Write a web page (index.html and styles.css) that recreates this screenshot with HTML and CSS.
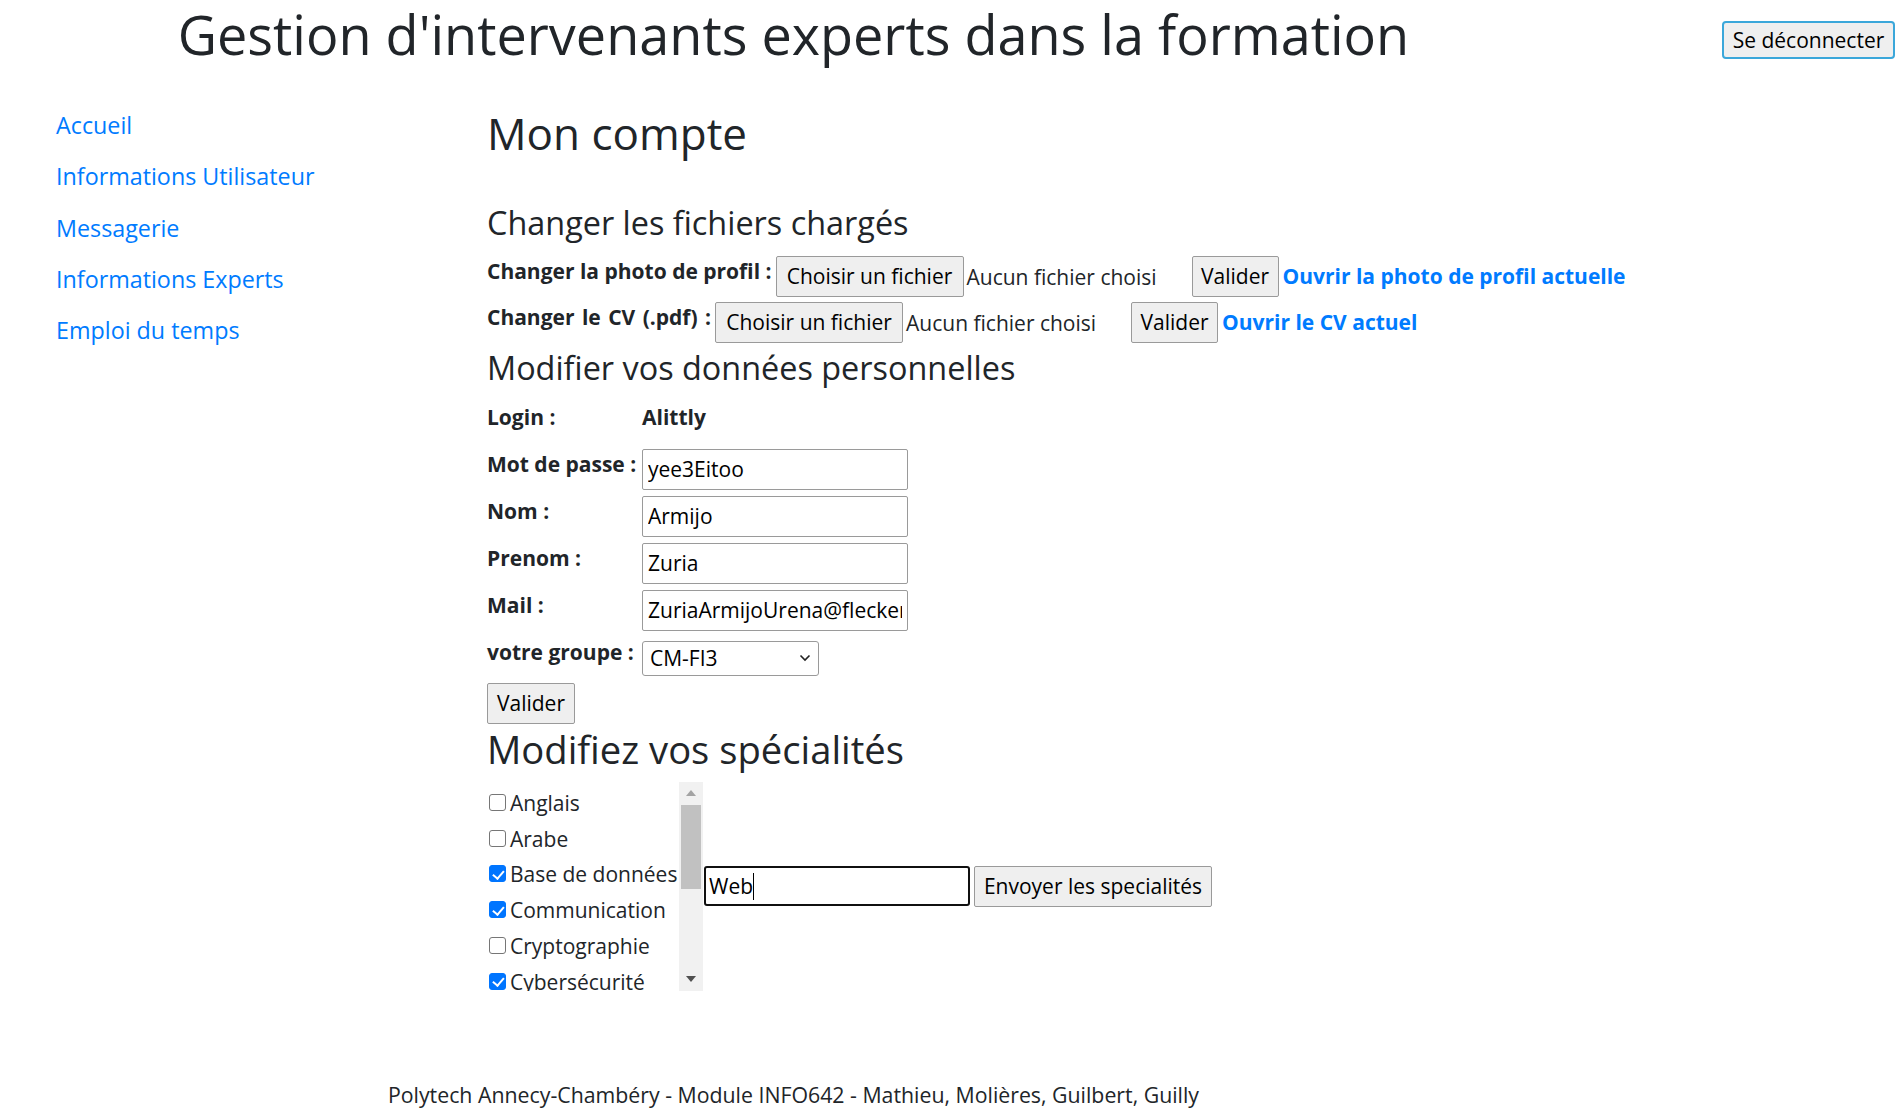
FILE: index.html
```html
<!DOCTYPE html>
<html lang="fr">
<head>
<meta charset="utf-8">
<title>Mon compte</title>
<link rel="stylesheet" href="styles.css">
</head>
<body>
<header class="top">
  <h1 class="top__title">Gestion d'intervenants experts dans la formation</h1>
  <button class="btn btn--logout" type="button">Se déconnecter</button>
</header>

<div class="layout">
  <nav class="side">
    <a class="side__link" href="#">Accueil</a>
    <a class="side__link" href="#">Informations Utilisateur</a>
    <a class="side__link" href="#">Messagerie</a>
    <a class="side__link" href="#">Informations Experts</a>
    <a class="side__link" href="#">Emploi du temps</a>
  </nav>

  <main class="main">
    <h2 class="h-page">Mon compte</h2>

    <h4 class="h-sec">Changer les fichiers chargés</h4>
    <div class="file-row">
      <span class="lbl">Changer la photo de profil :</span>
      <span class="file"><button class="btn btn--file" type="button">Choisir un fichier</button><span class="file__name">Aucun fichier choisi</span></span>
      <button class="btn btn--small" type="button">Valider</button>
      <a class="file-link" href="#">Ouvrir la photo de profil actuelle</a>
    </div>
    <div class="file-row file-row--last">
      <span class="lbl lbl--cv">Changer le CV (.pdf) :</span>
      <span class="file"><button class="btn btn--file" type="button">Choisir un fichier</button><span class="file__name">Aucun fichier choisi</span></span>
      <button class="btn btn--small" type="button">Valider</button>
      <a class="file-link" href="#">Ouvrir le CV actuel</a>
    </div>

    <h4 class="h-sec">Modifier vos données personnelles</h4>
    <div class="data">
      <span class="lbl">Login :</span>
      <span class="lbl">Alittly</span>
      <span class="lbl">Mot de passe :</span>
      <input class="field" type="text" value="yee3Eitoo">
      <span class="lbl">Nom :</span>
      <input class="field" type="text" value="Armijo">
      <span class="lbl">Prenom :</span>
      <input class="field" type="text" value="Zuria">
      <span class="lbl">Mail :</span>
      <input class="field" type="text" value="ZuriaArmijoUrena@fleckens.hu">
      <span class="lbl">votre groupe :</span>
      <div class="select"><span>CM-FI3</span><svg class="select__chev" width="12" height="8" viewBox="0 0 12 8"><path d="M1.5 1.5l4.5 4.5 4.5-4.5" fill="none" stroke="#222" stroke-width="1.6"/></svg></div>
    </div>
    <button class="btn btn--data" type="button">Valider</button>

    <h3 class="h-spec">Modifiez vos spécialités</h3>
    <div class="spec">
      <div class="spec__box">
        <div class="spec__list">
          <label class="spec__item"><input class="cb" type="checkbox">Anglais</label>
          <label class="spec__item"><input class="cb" type="checkbox">Arabe</label>
          <label class="spec__item"><input class="cb" type="checkbox" checked>Base de données</label>
          <label class="spec__item"><input class="cb" type="checkbox" checked>Communication</label>
          <label class="spec__item"><input class="cb" type="checkbox">Cryptographie</label>
          <label class="spec__item"><input class="cb" type="checkbox" checked>Cybersécurité</label>
          <label class="spec__item"><input class="cb" type="checkbox">Développement</label>
          <label class="spec__item"><input class="cb" type="checkbox">Électronique</label>
          <label class="spec__item"><input class="cb" type="checkbox">Gestion de projet</label>
          <label class="spec__item"><input class="cb" type="checkbox">Réseaux</label>
        </div>
        <div class="sbar">
          <div class="sbar__btn"><svg width="10" height="6" viewBox="0 0 10 6"><path d="M5 0L10 6H0z" fill="#a3a3a3"/></svg></div>
          <div class="sbar__track"><div class="sbar__thumb"></div></div>
          <div class="sbar__btn"><svg width="10" height="6" viewBox="0 0 10 6"><path d="M0 0H10L5 6z" fill="#505050"/></svg></div>
        </div>
      </div>
      <div class="field field--focus"><span>Web</span><span class="caret"></span></div>
      <button class="btn btn--send" type="button">Envoyer les specialités</button>
    </div>
  </main>
</div>

<footer class="foot">Polytech Annecy-Chambéry - Module INFO642 - Mathieu, Molières, Guilbert, Guilly</footer>
</body>
</html>
```

FILE: styles.css
```css
* { box-sizing: border-box; }

html, body { margin: 0; padding: 0; }

body {
  font-family: "Open Sans", "Noto Sans", "DejaVu Sans", sans-serif;
  color: #212529;
  background: #fff;
  font-size: 23px;
}

/* ---------- header ---------- */
.top {
  display: flex;
  align-items: flex-start;
  height: 66px;
}
.top__title {
  flex: 0 0 1587px;
  margin: 0;
  text-align: center;
  font-size: 54px;
  font-weight: 500;
  line-height: 68px;
}

/* ---------- buttons ---------- */
.btn {
  font-family: inherit;
  font-size: 21px;
  color: #000;
  background: #efefef;
  border: 1px solid #9a9a9a;
  border-radius: 2px;
  height: 41px;
  padding: 0 11px;
  line-height: 1;
  flex: none;
  white-space: nowrap;
}
.btn--logout {
  margin: 21px 9px 0 auto;
  width: 173px;
  height: 38px;
  padding: 0;
  border: 2px solid #3ba7da;
  border-radius: 4px;
}
.btn--file { width: 188px; padding: 0; }
.btn--small { width: 87px; padding: 0; margin-left: 4px; }
.btn--data { width: 88px; padding: 0; margin-top: 5px; display: block; }
.btn--send { width: 238px; padding: 0; margin-left: 4px; }

/* ---------- layout ---------- */
.layout { display: flex; }

.side {
  flex: 0 0 487px;
  padding: 34px 0 0 56px;
  display: flex;
  flex-direction: column;
  align-items: flex-start;
}
.side__link {
  display: block;
  padding: 8px 0;
  line-height: 35.3px;
  font-size: 23.3px;
  color: #007bff;
  text-decoration: none;
}

.main {
  flex: 1;
  padding-top: 40px;
}

.h-page {
  margin: 0 0 41px;
  font-size: 44px;
  font-weight: 500;
  line-height: 55px;
}
.h-sec {
  margin: 0 0 13px;
  font-size: 32.4px;
  font-weight: 500;
  line-height: 41.4px;
}
.h-spec {
  margin: 1px 0 9px;
  font-size: 38.2px;
  font-weight: 500;
  line-height: 48px;
}

/* ---------- file rows ---------- */
.lbl {
  font-weight: 700;
  font-size: 21px;
  line-height: 30px;
  margin-top: 0;
  white-space: nowrap;
}
.file-row {
  display: flex;
  align-items: flex-start;
  height: 41px;
  margin-bottom: 5px;
}
.file-row--last { margin-bottom: 4px; }
.file-row .lbl { margin-right: 4px; }
.file-row .lbl--cv { word-spacing: 2px; }
.file {
  display: flex;
  align-items: center;
  width: 412px;
  flex: none;
}
.file__name {
  margin-left: 3px;
  font-size: 21px;
  color: #212529;
  white-space: nowrap;
}
.file-link {
  margin-left: 4px;
  line-height: 41px;
  font-size: 21px;
  font-weight: 700;
  color: #007bff;
  text-decoration: none;
  white-space: nowrap;
}

/* ---------- personal data ---------- */
.data {
  display: grid;
  grid-template-columns: 155px auto;
  grid-auto-rows: 41px;
  row-gap: 6px;
  justify-content: start;
  align-items: start;
}
.field {
  width: 266px;
  height: 41px;
  padding: 0 5px;
  font-family: inherit;
  font-size: 21px;
  color: #000;
  border: 1px solid #9a9a9a;
  border-radius: 2px;
  background: #fff;
}
.select {
  width: 177px;
  height: 35px;
  margin-top: 4px;
  padding: 0 7px 0 7px;
  display: flex;
  align-items: center;
  justify-content: space-between;
  font-size: 21px;
  color: #000;
  border: 1px solid #9a9a9a;
  border-radius: 3px;
}
.select__chev { flex: none; }

/* ---------- specialities ---------- */
.spec {
  display: flex;
  align-items: center;
}
.spec__box {
  display: flex;
  width: 216px;
  height: 209px;
  flex: none;
}
.spec__list {
  flex: 1;
  overflow: hidden;
  padding-top: 4px;
}
.spec__item {
  display: block;
  font-size: 21px;
  line-height: 35.8px;
  white-space: nowrap;
  color: #212529;
}
.cb {
  -webkit-appearance: none;
  appearance: none;
  display: inline-block;
  position: relative;
  width: 17px;
  height: 17px;
  margin: 0 4px 0 2px;
  border: 1px solid #767676;
  border-radius: 3px;
  background: #fff;
  vertical-align: baseline;
}
.cb:checked {
  background: #0075ff;
  border-color: #0075ff;
}
.cb:checked::after {
  content: "";
  position: absolute;
  left: 5px;
  top: 1.5px;
  width: 4.5px;
  height: 9px;
  border: solid #fff;
  border-width: 0 2.6px 2.6px 0;
  transform: rotate(40deg);
}

.sbar {
  flex: 0 0 24px;
  display: flex;
  flex-direction: column;
  background: #f1f1f1;
}
.sbar__btn {
  height: 23px;
  display: flex;
  align-items: center;
  justify-content: center;
}
.sbar__track { flex: 1; }
.sbar__thumb {
  height: 84px;
  margin: 0 2px;
  background: #c1c1c1;
}

.field--focus {
  margin-left: 1px;
  height: 40px;
  padding: 0 3px;
  display: flex;
  align-items: center;
  border: 2px solid #101010;
  border-radius: 3px;
  flex: none;
}
.caret {
  display: inline-block;
  width: 1px;
  height: 27px;
  background: #000;
}

/* ---------- footer ---------- */
.foot {
  width: 1587px;
  margin-top: 87px;
  text-align: center;
  font-size: 21.3px;
  line-height: 34.5px;
  color: #212529;
}
```
